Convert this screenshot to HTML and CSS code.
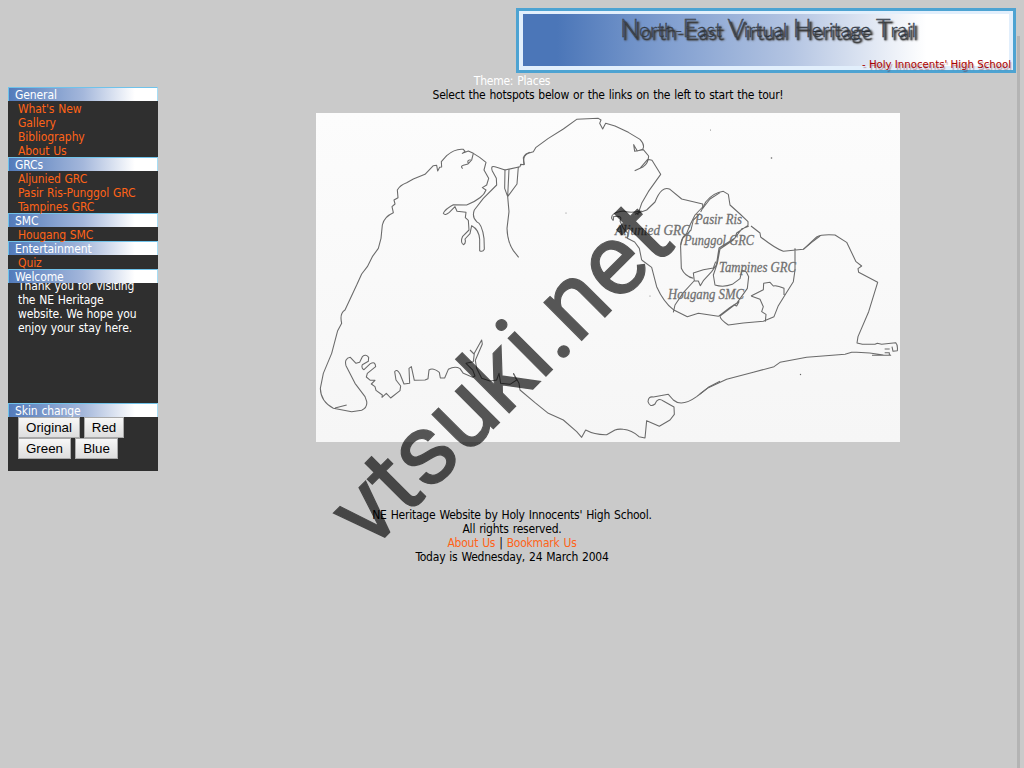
FILE: index.html
```
<!DOCTYPE html>
<html lang="en">
<head>
<meta charset="utf-8">
<title>North-East Virtual Heritage Trail</title>
<link rel="stylesheet" href="styles.css">
</head>
<body>
<header class="top">
<svg class="banner" viewBox="0 0 500 65">
<defs>
<linearGradient id="sky"><stop offset="0" stop-color="#4b76b8"/><stop offset=".07" stop-color="#4b76b8"/><stop offset=".3" stop-color="#819fd0"/><stop offset=".55" stop-color="#b3c4e2"/><stop offset=".83" stop-color="#fff"/></linearGradient>
</defs>
<rect x="1.5" y="1.5" width="497" height="62" fill="#e2effc" stroke="#4da3d2" stroke-width="3"/>
<rect x="7" y="6" width="486" height="52" fill="url(#sky)"/>
<text class="title" x="104" y="29" textLength="296" lengthAdjust="spacingAndGlyphs"><tspan class="cap">N</tspan>orth-<tspan class="cap">E</tspan>ast <tspan class="cap">V</tspan>irtual <tspan class="cap">H</tspan>eritage <tspan class="cap">T</tspan>rail</text>
<text class="school" x="346" y="60" textLength="149" lengthAdjust="spacingAndGlyphs">- Holy Innocents' High School</text>
</svg>
</header>
<div class="theme"><span class="t-theme">Theme: Places</span></div>
<div class="page">
<nav class="side">
<h2>General</h2>
<ul><li><a>What's New</a></li><li><a>Gallery</a></li><li><a>Bibliography</a></li><li><a>About Us</a></li></ul>
<h2>GRCs</h2>
<ul><li><a>Aljunied GRC</a></li><li><a>Pasir Ris-Punggol GRC</a></li><li><a>Tampines GRC</a></li></ul>
<h2>SMC</h2>
<ul><li><a>Hougang SMC</a></li></ul>
<h2>Entertainment</h2>
<ul><li><a>Quiz</a></li></ul>
<h2>Welcome</h2>
<div class="welcome"><p>Thank you for visiting<br>the NE Heritage<br>website. We hope you<br>enjoy your stay here.</p></div>
<h2>Skin change</h2>
<div class="skins"><div class="row"><button class="b1">Original</button><button class="b2">Red</button></div><div class="row"><button class="b3">Green</button><button class="b4">Blue</button></div></div>
</nav>
<main class="main">
<p class="intro">Select the hotspots below or the links on the left to start the tour!</p>
<svg class="map" viewBox="316 113 584 329">
<defs><linearGradient id="paper" x1="0" y1="0" x2="0" y2="1"><stop offset="0" stop-color="#fcfcfc"/><stop offset="1" stop-color="#f6f6f6"/></linearGradient></defs>
<rect x="316" y="113" width="584" height="329" fill="url(#paper)"/>
<g class="lines">
<!-- north-west coast and inlets -->
<g transform="translate(310 105) scale(.33333)">
<path d="M140 540L155 507L172 485L187 455L205 430L213 400L217 360Q222 335 250 323L246 305L255 297L252 285L264 278L262 255Q270 240 290 233L310 222L345 208L370 182L380 181L383 198L389 187L395 186L394 170L410 152Q435 130 460 133L465 139L457 145L475 138L490 145L509 157L528 172L522 195L536 220L530 240L517 248L528 255Q520 280 470 300L430 299Q405 312 400 325Q405 333 418 322L435 305L441 319L468 322L466 338L475 346L477 375L458 394Q450 412 460 419Q469 415 465 402L480 386L485 362Q507 373 509 403L509 437Q518 442 523 433L522 400Q516 355 500 350Q485 335 493 315L520 280L560 240L559 220L547 198Q540 178 560 187L585 195L630 185L632 178L642 179L640 158Q645 146 660 142"/>
<path d="M490 145L485 165L475 176Q470 165 482 164M474 177L460 181Q450 184 458 191M585 193L584 250L593 275L597 193M625 185L621 237L593 275L597 320L591 370Q592 410 610 437L626 457"/>
</g>
<!-- north coast and central boundaries -->
<g transform="translate(500 105) scale(.33333)">
<path d="M60 180L73 178Q66 153 85 145L100 140L108 127L145 100L190 72L230 43L295 40L303 45L299 55L308 72L317 55L345 63L385 82L420 103Q436 120 428 133L412 138L401 119L404 139L430 134L446 153Q445 175 430 185L404 197M420 190L443 163L456 166L482 208L445 260L425 295L413 330M405 328L440 315L465 291Q485 240 510 253L545 282L608 297V306L585 330L570 360L560 385Q540 400 542 430L544 490Q555 515 580 520M608 310L630 282L660 263M425 318Q390 325 370 318Q332 323 335 340Q342 354 340 335Q370 330 360 348L370 370L384 385L382 400L404 411L418 430L425 465"/>
</g>
<!-- constituencies -->
<g transform="translate(640 170) scale(.33333)">
<path d="M182 126L197 96Q220 68 250 64L265 73L270 105L300 132L324 155V166L290 189L285 204L237 234L229 285L215 305L190 332L181 347L175 333H163L160 309L190 299L220 294L227 275M180 131L160 150L153 180L128 205L122 225M326 169L306 176L280 210L240 237L232 280L220 315L225 345Q250 353 277 343L300 326L306 300L319 306L326 320L322 355L290 400L240 438Q240 448 265 465L310 459L370 454L402 440L415 407L435 375L460 335L465 300V235M333 168L360 189L362 201Q405 235 430 244L490 238L515 217L540 198M162 333L130 368L105 405L100 427M5 270L35 292L50 350Q70 395 100 419L142 440L175 430L235 439L270 412L297 395L290 408L280 404M333 378L370 359L371 340L390 337L400 348Q410 345 432 355V375M333 378L360 388L370 410L365 425L378 433L376 455"/>
</g>
<!-- east coast -->
<g transform="translate(700 220) scale(.33333)">
<path d="M310 88L350 51Q365 42 405 45L440 67L468 125L485 138L474 146L476 157L533 187L506 275L474 350L471 369L487 373L525 373L532 370L545 373L587 368Q594 375 592 392L579 394L576 380M554 387H569M554 398H568V404L572 406H516M550 405Q500 395 455 397L435 403L320 412L240 427L222 440L160 457L80 478L25 503L0 522"/>
</g>
<!-- south coast -->
<g transform="translate(500 320) scale(.33333)">
<path d="M600 222L590 230Q545 262 520 240L505 223L460 231Q445 228 444 245Q450 264 465 252Q473 231 490 243L522 261L523 283L510 300L478 319L440 302L435 354L417 350Q395 330 370 328Q355 326 345 330L320 344Q285 345 257 330L245 352L230 335L190 300L145 280L105 248L60 210L57 190L40 160M600 222L625 202L660 184"/>
</g>
<!-- south-west coast -->
<g transform="translate(310 320) scale(.33333)">
<path d="M140 -105L105 -30Q88 -20 95 10L83 32L65 100L40 160L31 205Q32 245 70 265L125 275L155 271Q173 263 170 244L165 230L135 190L108 137Q102 115 121 112L138 130L149 127L157 110Q168 101 176 112L175 124L157 134Q153 145 162 149L181 131Q196 122 197 140L172 160L169 171L181 181L195 181L184 192L195 200L198 211L217 225L216 232L229 220L242 234L270 212L272 198L258 180L254 155Q260 145 270 162L282 192L299 190L297 145L304 140L313 181L345 180L354 176L357 150Q368 141 388 157L391 174L404 174L415 148Q435 137 450 146L460 160L488 172L495 168L488 150L468 130L490 125L493 100L515 60L517 72L496 121L500 145L515 175L540 183L560 180L567 160L572 190L600 193L620 180L610 160M480 90L492 102M75 264L110 255"/>
</g>
</g>
<g class="labels">
<text x="615" y="235" textLength="75" lengthAdjust="spacingAndGlyphs">Aljunied GRC</text>
<text x="695" y="224" textLength="47" lengthAdjust="spacingAndGlyphs">Pasir Ris</text>
<text x="684" y="245" textLength="70" lengthAdjust="spacingAndGlyphs">Punggol GRC</text>
<text x="719" y="272" textLength="77" lengthAdjust="spacingAndGlyphs">Tampines GRC</text>
<text x="668" y="299" textLength="76" lengthAdjust="spacingAndGlyphs">Hougang SMC</text>
</g>
<g class="specks"><circle cx="771.500" cy="158" r=".8"/><circle cx="800.500" cy="374.500" r=".7"/><circle cx="566" cy="213" r=".5"/><circle cx="710.500" cy="130" r=".5"/><circle cx="650" cy="296" r=".5"/></g>
</svg>
</main>
</div>
<footer class="foot">
<p>NE Heritage Website by Holy Innocents' High School.</p>
<p>All rights reserved.</p>
<p><a>About Us</a> | <a>Bookmark Us</a></p>
<p>Today is Wednesday, 24 March 2004</p>
</footer>
<svg class="watermark" viewBox="0 0 1024 768"><text transform="translate(370 552) rotate(-45)" textLength="435" lengthAdjust="spacingAndGlyphs">vtsuki.net</text></svg>
<div class="scroll"></div>
</body>
</html>
```
FILE: styles.css
```
html { height: 100%; overflow: hidden; }
body { margin: 8px; background: #cacaca; color: #000; font: 12px/14px "DejaVu Sans Condensed", "DejaVu Sans", sans-serif; font-stretch: condensed; letter-spacing: -.23px; word-spacing: .8px; }
p, h2, ul { margin: 0; padding: 0; }
.top { display: flex; justify-content: flex-end; height: 65px; }
.banner { width: 500px; height: 65px; letter-spacing: 0; word-spacing: 0; }
.title { font: 300 20px Lato, sans-serif; fill: #59616d; stroke: #28303b; stroke-width: .4px; text-shadow: 2px 3px 1px #333, 3px 3px 2px #555; }
.cap { font-size: 25px; }
.school { font: 10.5px "DejaVu Sans Condensed", "DejaVu Sans", sans-serif; font-stretch: condensed; fill: #a90000; text-shadow: 1px 2px 1px rgba(120, 0, 0, .4); }
.theme { height: 14px; line-height: 16px; text-align: center; color: #fff; }
.page { display: flex; align-items: flex-start; height: 421px; }
.side { width: 150px; height: 384px; background: #2f2f2f; flex: none; letter-spacing: -.1px; word-spacing: .5px; }
.side h2 { box-sizing: border-box; height: 14px; padding-left: 6px; border: 1px solid #70c3ea; border-bottom: 0; border-right-color: #a6ddf5; background: linear-gradient(90deg, #527bbb, #a4b7db 50%, #fff 85%); color: #fff; font-size: 12px; line-height: 15px; font-weight: normal; }
.side ul { list-style: none; padding-left: 10px; }
.side li { height: 14px; line-height: 17px; }
a { color: #ff6317; }
.welcome { height: 120px; overflow: hidden; padding-left: 10px; color: #fff; }
.welcome p { margin-top: -4px; }
.skins { padding: 0 0 0 10px; }
.row { display: flex; gap: 4px; height: 21px; }
.row button { box-sizing: border-box; height: 21px; padding: 0; border: 1px solid #a9a9a9; background: linear-gradient(#f7f7f7, #dedede); color: #000; font: 13.333px/17px "Liberation Sans", sans-serif; letter-spacing: 0; word-spacing: 0; }
.b1 { width: 62px; }
.b2 { width: 40px; }
.b3 { width: 53px; }
.b4 { width: 43px; }
.main { margin-left: 42px; flex: 1; display: flex; flex-direction: column; align-items: center; }
.intro { height: 26px; line-height: 17px; }
.map { width: 584px; height: 329px; letter-spacing: 0; word-spacing: 0; }
.lines path { fill: none; stroke: #6a6a6a; stroke-width: 3.2; stroke-linejoin: round; }
.labels { font: italic 15px "Liberation Serif", serif; fill: #707070; stroke: #707070; stroke-width: .3px; }
.specks { fill: #666; }
.foot { text-align: center; }
.watermark { position: absolute; left: 0; top: 0; width: 1024px; height: 768px; opacity: .65; fill: #000; stroke: #000; stroke-width: 1.2px; pointer-events: none; font: 400 101px Roboto, sans-serif; letter-spacing: 0; word-spacing: 0; }
.scroll { position: absolute; left: 1017px; top: 36px; width: 3px; height: 732px; background: #b4b4b4; }
```
